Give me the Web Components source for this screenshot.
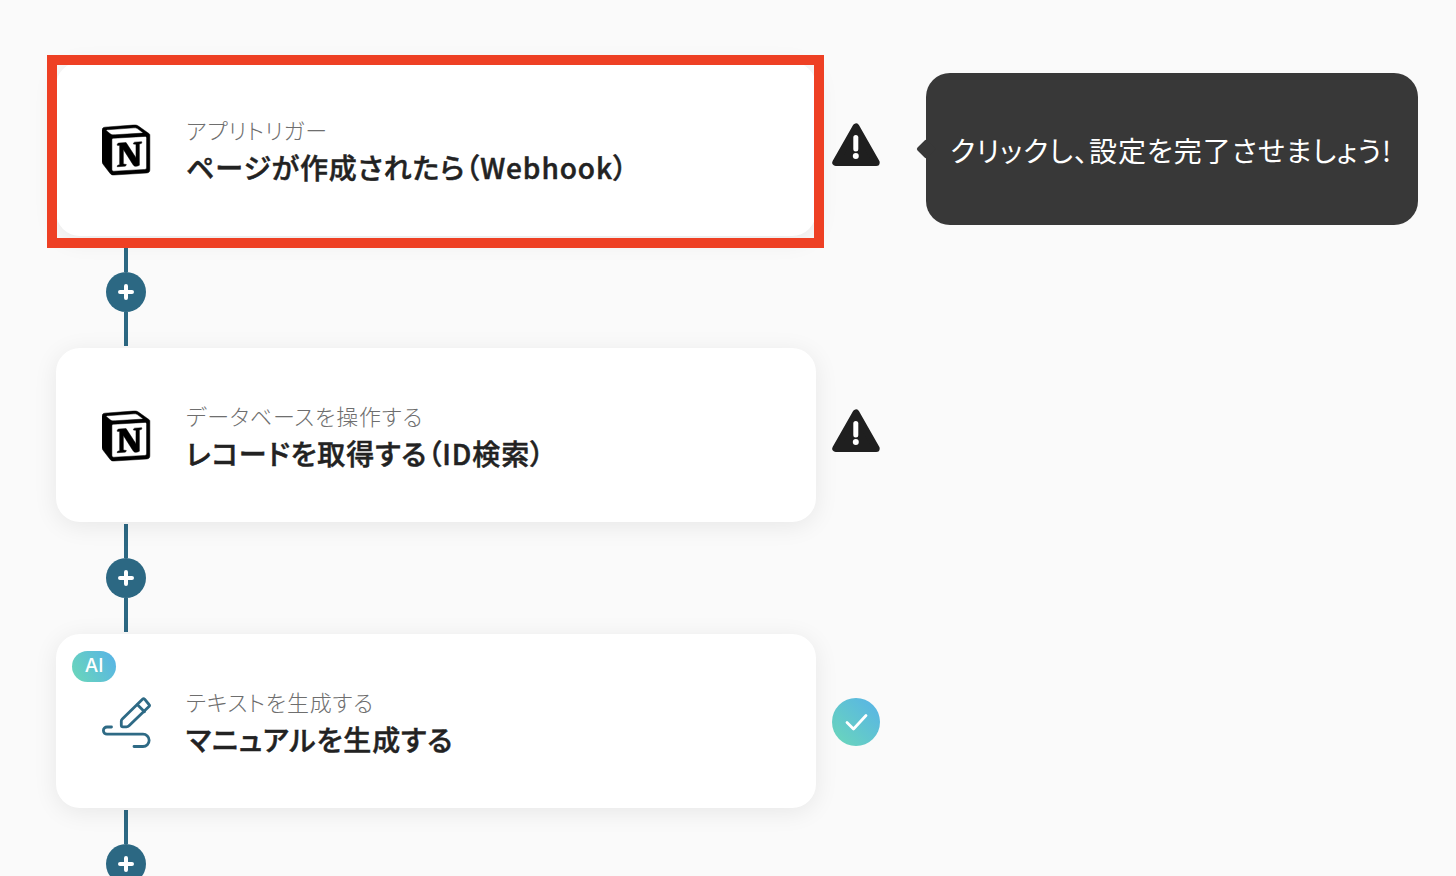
<!DOCTYPE html>
<html lang="ja">
<head>
<meta charset="utf-8">
<title>flow</title>
<style>
  html, body {
    margin: 0;
    height: 100%;
    overflow: hidden;
    background: #fafafa;
  }
  body {
    font-family: "Noto Sans CJK JP", "Noto Sans", sans-serif;
    font-feature-settings: "palt";
    color: #2a2a2a;
  }
  flow-list {
    padding: 62px 0 0 56px;
  }
</style>
</head>
<body>

<template id="notion-tpl">
  <style>
    :host { display: block; width: 50px; height: 52px; margin-top: 2px; }
    svg { display: block; width: 100%; height: 100%; }
  </style>
  <svg viewBox="0 0 100 100">
    <path fill="#fff" d="M6.017 4.313l55.333-4.087c6.797-.583 8.543-.19 12.817 2.917l17.663 12.443c2.913 2.14 3.883 2.723 3.883 5.053v68.243c0 4.277-1.553 6.807-6.99 7.193L24.467 99.967c-4.08.193-6.023-.39-8.16-3.113L3.3 79.94C.967 76.827 0 74.497 0 71.773V11.113c0-3.497 1.553-6.413 6.017-6.8z"/>
    <path fill="#000" stroke="#000" stroke-width="1" fill-rule="evenodd" d="M61.35.227L6.017 4.314C1.553 4.7 0 7.617 0 11.113v60.66c0 2.723.967 5.053 3.3 8.167l13.007 16.913c2.137 2.723 4.08 3.307 8.16 3.113l64.257-3.89c5.433-.387 6.99-2.917 6.99-7.193V20.64c0-2.21-.873-2.847-3.443-4.733L74.167 3.143C69.894.036 68.147-.357 61.35.226zM25.92 19.523c-5.247.353-6.437.433-9.417-1.99L8.927 11.507c-.77-.78-.383-1.753 1.557-1.947l53.193-3.887c4.467-.39 6.793 1.167 8.54 2.527l9.123 6.61c.39.197 1.36 1.36.193 1.36l-54.933 3.307-.68.047zM19.803 88.3V30.367c0-2.53.777-3.697 3.103-3.893L86 22.78c2.14-.193 3.107 1.167 3.107 3.693v57.547c0 2.53-.39 4.67-3.883 4.863l-60.377 3.5c-3.493.193-5.043-.97-5.043-4.083zm59.6-54.827c.387 1.75 0 3.5-1.75 3.7l-2.91.577v42.773c-2.527 1.36-4.853 2.137-6.797 2.137-3.107 0-3.883-.973-6.21-3.887l-19.03-29.94v28.967l6.02 1.363s0 3.5-4.857 3.5l-13.39.777c-.39-.78 0-2.723 1.357-3.11l3.497-.97v-38.3L30.48 40.667c-.39-1.75.58-4.277 3.3-4.473l14.367-.967 19.8 30.327v-26.83l-5.047-.58c-.39-2.143 1.163-3.7 3.103-3.89l13.4-.78z"/>
  </svg>
</template>

<template id="pen-tpl">
  <style>
    :host { display: block; width: 50px; height: 52px; margin-top: 4px; }
    svg { display: block; width: 100%; height: 100%; }
  </style>
  <svg viewBox="0 0 50 52" fill="none" stroke="#2e6a85" stroke-width="2.8" stroke-linecap="round" stroke-linejoin="round">
    <path d="M40.5 2.2L20.3 22q-1 1-1 2v4.2q0 1.6 1.6 1.6h3.6q1.5 0 2.5-1L47 9.5q1-1 0-2L42.6 2.2q-1-1-2.100 0z"/>
    <path d="M35.500 7.800L42.500 14.800"/>
    <path d="M9.500 30H5a3.500 3.500 0 0 0 0 7.200H41a6 6 0 0 1 0 12.300H32"/>
  </svg>
</template>

<template id="status-tpl">
  <style>
    :host { display: block; width: 48px; height: 48px; }
    :host([type="ok"]) { margin-top: 2px; }
    svg { display: block; width: 48px; height: 48px; overflow: visible; }
    .ok {
      width: 48px;
      height: 48px;
      border-radius: 50%;
      background: linear-gradient(45deg, #6bd8b8, #57b2e8);
    }
  </style>
  <div id="box"></div>
</template>

<template id="connector-tpl">
  <style>
    :host {
      display: flex;
      flex-direction: column;
      align-items: center;
      width: 40px;
      margin: 2px 0 0 50px;
      height: 108px;
      padding-bottom: 2px;
    }
    .line { width: 4px; background: #2c6883; }
    .top { height: 34px; }
    .bottom { flex: 1; }
    .plus {
      flex: none;
      width: 40px;
      height: 40px;
      border-radius: 50%;
      background: #2c6883;
      display: flex;
      align-items: center;
      justify-content: center;
    }
  </style>
  <div class="line top"></div>
  <div class="plus">
    <svg width="18" height="18" viewBox="0 0 18 18"><path d="M9 3v12M3 9h12" stroke="#fff" stroke-width="4" stroke-linecap="round"/></svg>
  </div>
  <div class="line bottom"></div>
</template>

<template id="tip-tpl">
  <style>
    :host {
      position: relative;
      display: flex;
      align-items: center;
      box-sizing: border-box;
      width: 492px;
      height: 152px;
      margin-left: 46px;
      padding: 2px 0 0 24px;
      border-radius: 24px;
      background: #383838;
      color: #fff;
      font-size: 28px;
      letter-spacing: 1px;
      font-weight: 400;
      white-space: nowrap;
    }
    :host::before {
      content: "";
      position: absolute;
      left: -7px;
      top: 69px;
      width: 14px;
      height: 14px;
      background: #383838;
      border-radius: 2px;
      transform: rotate(45deg);
    }
  </style>
  <slot></slot>
</template>

<template id="step-tpl">
  <style>
    :host {
      position: relative;
      z-index: 1;
      display: flex;
      align-items: center;
      width: max-content;
    }
    .card {
      position: relative;
      box-sizing: border-box;
      width: 760px;
      height: 174px;
      display: flex;
      align-items: center;
      gap: 34px;
      padding-left: 46px;
      background: #fff;
      border-radius: 24px;
      box-shadow: 0 4px 24px rgba(0, 0, 0, .08);
    }
    :host([active]) .card::after {
      content: "";
      position: absolute;
      left: -9px;
      top: -7px;
      width: 777px;
      height: 193px;
      box-sizing: border-box;
      border: 10px solid #ee4024;
    }
    .badge {
      position: absolute;
      left: 16px;
      top: 17px;
      width: 44px;
      height: 31px;
      border-radius: 16px;
      background: linear-gradient(60deg, #6bd8b8, #57b2e8);
      color: #fff;
      font-family: Inter, "Noto Sans", sans-serif;
      font-size: 19px;
      font-weight: 500;
      line-height: 30px;
      text-align: center;
    }
    .badge[hidden] { display: none; }
    .label {
      color: #6e6e6e;
      font-size: 22px;
      font-weight: 300;
      letter-spacing: .8px;
      line-height: 32px;
      white-space: nowrap;
    }
    .title {
      margin-top: 2px;
      color: #222;
      font-size: 28px;
      letter-spacing: .9px;
      font-weight: 500;
      -webkit-text-stroke: .5px #222;
      line-height: 40px;
      white-space: nowrap;
    }
    .side { margin-left: 16px; }
    .text { margin-top: 2px; }
  </style>
  <div class="card">
    <div class="badge" hidden>AI</div>
    <slot name="icon"></slot>
    <div class="text">
      <div class="label"></div>
      <div class="title"></div>
    </div>
  </div>
  <div class="side"><slot name="status"></slot></div>
  <slot name="tip"></slot>
</template>

<flow-list>
  <flow-step active label="アプリトリガー" title="ページが作成されたら（Webhook）">
    <notion-icon slot="icon"></notion-icon>
    <status-icon slot="status" type="warn"></status-icon>
    <flow-tip slot="tip">クリックし、設定を完了させましょう!</flow-tip>
  </flow-step>
  <flow-connector></flow-connector>
  <flow-step label="データベースを操作する" title="レコードを取得する（ID検索）">
    <notion-icon slot="icon"></notion-icon>
    <status-icon slot="status" type="warn"></status-icon>
  </flow-step>
  <flow-connector></flow-connector>
  <flow-step ai label="テキストを生成する" title="マニュアルを生成する">
    <pen-icon slot="icon"></pen-icon>
    <status-icon slot="status" type="ok"></status-icon>
  </flow-step>
  <flow-connector></flow-connector>
</flow-list>

<script>
  function useTemplate(el, id) {
    let shadow = el.attachShadow({ mode: 'open' });
    shadow.appendChild(document.getElementById(id).content.cloneNode(true));
    return shadow;
  }

  class FlowList extends HTMLElement {
    constructor() {
      super();
      let shadow = this.attachShadow({ mode: 'open' });
      shadow.innerHTML = '<style>:host { display: block; }</style><slot></slot>';
    }
  }

  class NotionIcon extends HTMLElement {
    constructor() {
      super();
      useTemplate(this, 'notion-tpl');
    }
  }

  class PenIcon extends HTMLElement {
    constructor() {
      super();
      useTemplate(this, 'pen-tpl');
    }
  }

  class StatusIcon extends HTMLElement {
    constructor() {
      super();
      let shadow = useTemplate(this, 'status-tpl');
      let box = shadow.querySelector('#box');
      if (this.getAttribute('type') === 'ok') {
        box.className = 'ok';
        box.innerHTML = '<svg viewBox="0 0 48 48"><path d="M15 24.500l6.500 6.500L34 17.500" fill="none" stroke="#fff" stroke-width="2.800" stroke-linecap="round" stroke-linejoin="round"/></svg>';
      } else {
        box.innerHTML = '<svg viewBox="0 0 48 48"><path d="M24 2L3.800 37.500H44.200z" fill="#1f1f1f" stroke="#1f1f1f" stroke-width="7" stroke-linejoin="round"/><path d="M23.800 12.500L23.800 24" stroke="#fff" stroke-width="5" stroke-linecap="round"/><circle cx="23.800" cy="31" r="3" fill="#fff"/></svg>';
      }
    }
  }

  class FlowConnector extends HTMLElement {
    constructor() {
      super();
      useTemplate(this, 'connector-tpl');
    }
  }

  class FlowTip extends HTMLElement {
    constructor() {
      super();
      useTemplate(this, 'tip-tpl');
    }
  }

  class FlowStep extends HTMLElement {
    constructor() {
      super();
      let shadow = useTemplate(this, 'step-tpl');
      shadow.querySelector('.label').textContent = this.getAttribute('label');
      shadow.querySelector('.title').textContent = this.getAttribute('title');
      if (this.hasAttribute('ai')) {
        shadow.querySelector('.badge').hidden = false;
      }
    }
  }

  customElements.define('flow-list', FlowList);
  customElements.define('notion-icon', NotionIcon);
  customElements.define('pen-icon', PenIcon);
  customElements.define('status-icon', StatusIcon);
  customElements.define('flow-connector', FlowConnector);
  customElements.define('flow-tip', FlowTip);
  customElements.define('flow-step', FlowStep);
</script>

</body>
</html>
